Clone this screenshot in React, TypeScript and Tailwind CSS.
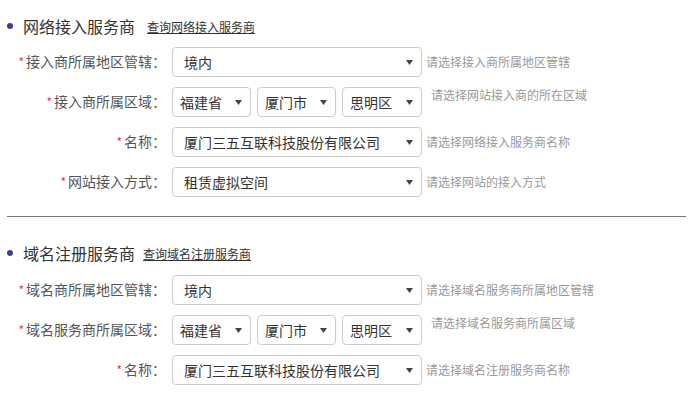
import type { ReactNode } from 'react';

function Arrow() {
  return (
    <svg width="7" height="5" viewBox="0 0 7 5" className="shrink-0">
      <path d="M0 0 H7 L3.5 5 Z" fill="#444" />
    </svg>
  );
}

function Select({ value, className = '' }: { value: string; className?: string }) {
  return (
    <div
      className={`flex h-[30px] items-center justify-between rounded-[4px] border border-[#cccccc] bg-white pr-[8px] text-[14px] leading-[20px] text-[#333] ${className}`}
    >
      <span className="truncate">{value}</span>
      <Arrow />
    </div>
  );
}

function Row({
  label,
  hint,
  hintTop,
  children,
}: {
  label: string;
  hint: string;
  hintTop?: boolean;
  children: ReactNode;
}) {
  return (
    <div className="flex h-[30px]">
      <div className="flex w-[159px] items-center justify-end pb-[3px] text-[14px] leading-[20px] text-[#555]">
        <span className="mr-[2px] translate-y-[1px] text-[12px] text-[#e4393c]">*</span>
        <span>{label}：</span>
      </div>
      <div className="ml-[6px] flex w-[250px]">{children}</div>
      {hintTop ? (
        <div className="ml-[9px] text-[12px] leading-[16px] text-[#999]">{hint}</div>
      ) : (
        <div className="ml-[4px] flex items-center text-[12px] leading-[16px] text-[#999]">{hint}</div>
      )}
    </div>
  );
}

function Region() {
  return (
    <div className="flex gap-[6px]">
      <Select value="福建省" className="w-[79px] pl-[7px]" />
      <Select value="厦门市" className="w-[79px] pl-[7px]" />
      <Select value="思明区" className="w-[80px] pl-[7px]" />
    </div>
  );
}

function Heading({ title, link, linkGap }: { title: string; link: string; linkGap: string }) {
  return (
    <div className="flex h-[22px] items-center">
      <span className="h-[6px] w-[6px] rounded-full bg-[#3b3f8f]" />
      <span className="ml-[10px] text-[16px] leading-[22px] text-[#333]">{title}</span>
      <a className={`${linkGap} mt-[2px] text-[12px] leading-[16px] text-[#333] underline`}>{link}</a>
    </div>
  );
}

export default function App() {
  return (
    <div
      className="h-[398px] w-[693px] overflow-hidden bg-white px-[7px] pt-[15px]"
      style={{ fontFamily: '"Noto Sans CJK SC", "Noto Sans", sans-serif' }}
    >
      <Heading title="网络接入服务商" link="查询网络接入服务商" linkGap="ml-[12px]" />
      <div className="mt-[10px] flex flex-col gap-[10px]">
        <Row label="接入商所属地区管辖" hint="请选择接入商所属地区管辖">
          <Select value="境内" className="w-full pl-[11px]" />
        </Row>
        <Row label="接入商所属区域" hint="请选择网站接入商的所在区域" hintTop>
          <Region />
        </Row>
        <Row label="名称" hint="请选择网络接入服务商名称">
          <Select value="厦门三五互联科技股份有限公司" className="w-full pl-[11px]" />
        </Row>
        <Row label="网站接入方式" hint="请选择网站的接入方式">
          <Select value="租赁虚拟空间" className="w-full pl-[11px]" />
        </Row>
      </div>

      <div className="mt-[19px] border-t border-[#777]" />

      <div className="mt-[25px]">
        <Heading title="域名注册服务商" link="查询域名注册服务商" linkGap="ml-[8px]" />
      </div>
      <div className="mt-[11px] flex flex-col gap-[10px]">
        <Row label="域名商所属地区管辖" hint="请选择域名服务商所属地区管辖">
          <Select value="境内" className="w-full pl-[11px]" />
        </Row>
        <Row label="域名服务商所属区域" hint="请选择域名服务商所属区域" hintTop>
          <Region />
        </Row>
        <Row label="名称" hint="请选择域名注册服务商名称">
          <Select value="厦门三五互联科技股份有限公司" className="w-full pl-[11px]" />
        </Row>
      </div>
    </div>
  );
}
